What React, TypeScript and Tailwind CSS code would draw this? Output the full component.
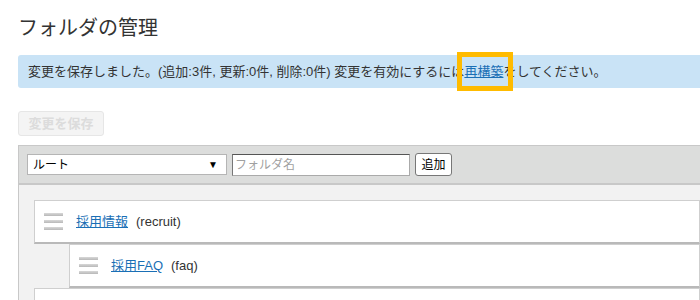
import React from 'react';

const jp = "font-['Liberation_Sans','Noto_Sans_CJK_JP',sans-serif]";

function Handle() {
  return (
    <div className="flex w-[19px] flex-col gap-[4px]">
      <div className="h-[3px] bg-gradient-to-b from-[#d8d8d8] to-[#b8b8b8]" />
      <div className="h-[3px] bg-gradient-to-b from-[#d8d8d8] to-[#b8b8b8]" />
      <div className="h-[3px] bg-gradient-to-b from-[#d8d8d8] to-[#b8b8b8]" />
    </div>
  );
}

function Row({ name, slug }: { name: string; slug: string }) {
  return (
    <div className="flex h-[44px] items-center gap-[13px] border border-b-2 border-[#cfcfcf] border-b-[#b9b9b9] bg-white pl-[9px]">
      <Handle />
      <span className="text-[13px]">
        <a className="text-[#1a6fb5] underline">{name}</a>
        <span className="ml-[8px] text-[#333]">({slug})</span>
      </span>
    </div>
  );
}

export default function App() {
  return (
    <div className={`${jp} h-[300px] w-[700px] overflow-hidden bg-white pl-[18px] text-[#333]`}>
      <h1 className="pt-[15px] text-[20px] leading-[26px] font-normal">フォルダの管理</h1>

      <div className="mt-[14px] flex h-[33px] items-center rounded-l-[3px] bg-[#c9e3f6] pl-[10px] text-[13px] whitespace-nowrap">
        <span>変更を保存しました。(追加:3件, 更新:0件, 削除:0件) 変更を有効にするには</span>
        <span className="relative">
          <a className="text-[#1a6fb5] underline">再構築</a>
          <span className="absolute top-[-10px] right-[-10px] bottom-[-10px] left-[-7px] border-[5px] border-[#ffbb00]" />
        </span>
        <span>をしてください。</span>
      </div>

      <button className="mt-[23px] h-[25px] w-[86px] rounded-[3px] border border-[#e6e6e6] bg-[#f4f4f4] text-[13px] font-bold text-[#dcdcdc]">
        変更を保存
      </button>

      <div className="mt-[9px] border border-r-0 border-[#c8c8c8] bg-[#f2f2f2]">
        <div className="flex h-[39px] items-center gap-[5px] border-b-2 border-[#c8c8c8] bg-[#dcdddc] pl-[8px]">
          <div className="flex h-[21px] w-[200px] items-center justify-between border border-[#b5b5b5] bg-white pr-[8px] pl-[5px] text-[12px] text-black">
            <span>ルート</span>
            <span className="text-[10px]">▼</span>
          </div>
          <div className="flex h-[22px] w-[178px] items-center border border-[#aaa] border-t-[#555] border-l-[#777] bg-white pl-[2px] text-[12px] text-[#a0a0a0]">
            フォルダ名
          </div>
          <button className="h-[23px] w-[37px] rounded-[3px] border border-[#777] bg-white text-[12px] text-black">
            追加
          </button>
        </div>
        <div className="pt-[15px] pl-[15px]">
          <Row name="採用情報" slug="recruit" />
          <div className="pl-[35px]">
            <Row name="採用FAQ" slug="faq" />
          </div>
          <div className="h-[20px] border border-[#cfcfcf] bg-white" />
        </div>
      </div>
    </div>
  );
}
